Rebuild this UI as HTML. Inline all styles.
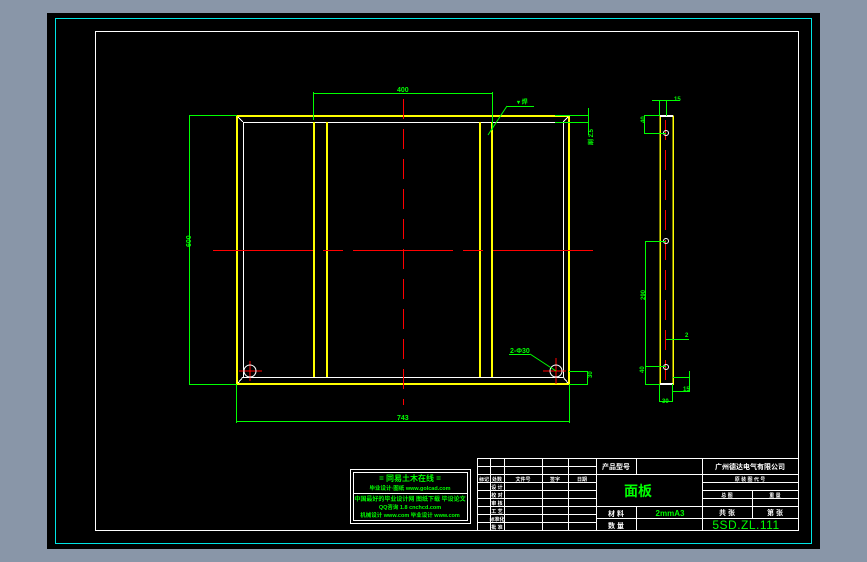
<!DOCTYPE html>
<html><head><meta charset="utf-8"><style>
html,body{margin:0;padding:0;background:#8996a8;width:867px;height:562px;overflow:hidden}
svg{display:block}
text{font-family:"Liberation Sans","Noto Sans CJK SC",sans-serif}
</style></head><body>
<svg width="867" height="562" viewBox="0 0 867 562" xmlns="http://www.w3.org/2000/svg" shape-rendering="crispEdges">
<rect x="47" y="13" width="773" height="536" fill="#000"/>
<rect x="55.5" y="18.5" width="756" height="525" fill="none" stroke="#00e5e5" stroke-width="1"/>
<rect x="95.5" y="31.5" width="703" height="499" fill="none" stroke="#fff" stroke-width="1"/>

<!-- front view -->
<g fill="none">
<rect x="237" y="116" width="332" height="268" stroke="#ffff00" stroke-width="2"/>
<rect x="243.5" y="122.5" width="320" height="255" stroke="#fff" stroke-width="1"/>
<line x1="238" y1="117" x2="243" y2="122" stroke="#fff"/>
<line x1="568" y1="117" x2="563" y2="122" stroke="#fff"/>
<line x1="238" y1="383" x2="243" y2="377" stroke="#fff"/>
<line x1="568" y1="383" x2="563" y2="377" stroke="#fff"/>
<g stroke="#ffff00" stroke-width="2">
<line x1="314" y1="122" x2="314" y2="377"/><line x1="327" y1="122" x2="327" y2="377"/>
<line x1="480" y1="122" x2="480" y2="377"/><line x1="492" y1="122" x2="492" y2="377"/>
</g>
<g stroke="#ff0000" stroke-width="1">
<line x1="213" y1="250.5" x2="313" y2="250.5"/><line x1="323" y1="250.5" x2="343" y2="250.5"/>
<line x1="353" y1="250.5" x2="453" y2="250.5"/><line x1="463" y1="250.5" x2="483" y2="250.5"/>
<line x1="493" y1="250.5" x2="593" y2="250.5"/>
<line x1="403.5" y1="99" x2="403.5" y2="405" stroke-dasharray="20,10"/>
<line x1="239" y1="371" x2="262" y2="371"/><line x1="250" y1="361" x2="250" y2="381"/>
<line x1="543" y1="371" x2="566" y2="371"/><line x1="556" y1="358" x2="556" y2="384"/>
</g>
<circle cx="250" cy="371" r="6" stroke="#fff" shape-rendering="auto"/>
<circle cx="556" cy="371" r="6" stroke="#fff" shape-rendering="auto"/>
<g stroke="#00ff00" stroke-width="1">
<line x1="314" y1="93.5" x2="492" y2="93.5"/><line x1="313.5" y1="92" x2="313.5" y2="120"/><line x1="492.5" y1="92" x2="492.5" y2="130"/>
<line x1="189.5" y1="115" x2="189.5" y2="384"/><line x1="189" y1="115.5" x2="237" y2="115.5"/><line x1="189" y1="384.5" x2="237" y2="384.5"/>
<line x1="237" y1="421.5" x2="569" y2="421.5"/><line x1="236.5" y1="384" x2="236.5" y2="423"/><line x1="569.5" y1="384" x2="569.5" y2="423"/>
<line x1="488" y1="135" x2="507" y2="106" shape-rendering="auto"/><line x1="507" y1="106.5" x2="534" y2="106.5"/>
<line x1="555" y1="115.5" x2="589" y2="115.5"/><line x1="555" y1="122.5" x2="589" y2="122.5"/><line x1="588.5" y1="108" x2="588.5" y2="135"/>
<line x1="509" y1="354.5" x2="530" y2="354.5"/><line x1="530" y1="354" x2="556" y2="371" shape-rendering="auto"/>
<line x1="569" y1="371.5" x2="588" y2="371.5"/><line x1="569" y1="384.5" x2="588" y2="384.5"/><line x1="587.5" y1="371" x2="587.5" y2="384"/>
</g>
</g>
<g fill="#00ff00" font-size="7" font-weight="bold">
<text x="397" y="92">400</text>
<text x="517" y="104" font-size="6">▾ 焊</text>
<text x="510" y="353" font-size="7">2-Φ30</text>
<text x="190" y="254" transform="rotate(-90 187 250)" font-size="7">600</text>
<text x="397" y="420">743</text>
<text x="588" y="382" font-size="6" transform="rotate(-90 588 378)">30</text>
<text x="588" y="150" font-size="6" transform="rotate(-90 588 145)">刷 2.5</text>
</g>

<!-- side view -->
<g fill="none">
<rect x="660" y="116" width="13" height="268" stroke="#ffff00" stroke-width="1.5"/>
<line x1="660" y1="116" x2="673" y2="116" stroke="#fff" stroke-width="2"/>
<line x1="660" y1="384" x2="673" y2="384" stroke="#fff" stroke-width="2"/>
<line x1="665.5" y1="120" x2="665.5" y2="390" stroke="#ff0000" stroke-dasharray="20,10"/>
<circle cx="666" cy="133" r="2.5" stroke="#fff" shape-rendering="auto"/><circle cx="666" cy="241" r="2.5" stroke="#fff" shape-rendering="auto"/><circle cx="666" cy="367" r="2.5" stroke="#fff" shape-rendering="auto"/>
<g stroke="#00ff00">
<line x1="659.5" y1="100" x2="659.5" y2="116"/><line x1="666.5" y1="100" x2="666.5" y2="116"/><line x1="652" y1="100.5" x2="680" y2="100.5"/>
<line x1="644.5" y1="115" x2="644.5" y2="133"/><line x1="644" y1="115.5" x2="660" y2="115.5"/><line x1="644" y1="133.5" x2="666" y2="133.5"/>
<line x1="645.5" y1="241" x2="645.5" y2="384"/><line x1="645" y1="241.5" x2="666" y2="241.5"/><line x1="645" y1="366.5" x2="666" y2="366.5"/><line x1="645" y1="384.5" x2="660" y2="384.5"/>
<line x1="666" y1="339.5" x2="689" y2="339.5"/>
<line x1="673" y1="377.5" x2="690" y2="377.5"/><line x1="689.5" y1="371" x2="689.5" y2="392"/><line x1="673" y1="391.5" x2="690" y2="391.5"/>
<line x1="659.5" y1="384" x2="659.5" y2="402"/><line x1="672.5" y1="384" x2="672.5" y2="402"/><line x1="659" y1="401.5" x2="673" y2="401.5"/>
</g>
</g>
<g fill="#00ff00" font-size="6" font-weight="bold">
<text x="674" y="101">15</text>
<text x="643" y="129" transform="rotate(-90 641 125)">40</text>
<text x="643" y="306" transform="rotate(-90 641 302)">290</text>
<text x="643" y="378" transform="rotate(-90 641 375)">40</text>
<text x="685" y="337">2</text>
<text x="683" y="391">15</text>
<text x="662" y="403">30</text>
</g>

<!-- logo box -->
<rect x="350.5" y="469.5" width="120" height="54" fill="none" stroke="#fff"/>
<rect x="353.5" y="472.5" width="114" height="48" fill="none" stroke="#fff"/>
<line x1="353" y1="493.5" x2="467" y2="493.5" stroke="#fff"/>
<g fill="#00ff00" font-size="7" text-anchor="middle" font-weight="bold">
<text x="410" y="481" font-size="8">=  同易土木在线  =</text>
<text x="410" y="490" font-size="5.5">毕业设计·图纸     www.golcad.com</text>
<text x="410" y="501" font-size="6">中国最好的毕业设计网 图纸下载 毕设论文</text>
<text x="410" y="509" font-size="5.5">QQ咨询 1.8 cnchcd.com</text>
<text x="410" y="517" font-size="5.5">机械设计 www.com  毕业设计 www.com</text>
</g>

<!-- title block -->
<g stroke="#fff" stroke-width="1" fill="none">
<rect x="477.5" y="458.5" width="321" height="72"/>
<line x1="477" y1="466.5" x2="596" y2="466.5"/>
<line x1="477" y1="474.5" x2="798" y2="474.5"/>
<line x1="477" y1="482.5" x2="596" y2="482.5"/><line x1="702" y1="482.5" x2="798" y2="482.5"/>
<line x1="477" y1="490.5" x2="596" y2="490.5"/><line x1="702" y1="490.5" x2="798" y2="490.5"/>
<line x1="477" y1="498.5" x2="596" y2="498.5"/><line x1="702" y1="498.5" x2="798" y2="498.5"/>
<line x1="477" y1="506.5" x2="798" y2="506.5"/>
<line x1="477" y1="514.5" x2="596" y2="514.5"/>
<line x1="596" y1="518.5" x2="798" y2="518.5"/>
<line x1="477" y1="522.5" x2="596" y2="522.5"/>
<line x1="490.5" y1="458" x2="490.5" y2="530"/><line x1="504.5" y1="458" x2="504.5" y2="530"/>
<line x1="542.5" y1="458" x2="542.5" y2="530"/><line x1="568.5" y1="458" x2="568.5" y2="530"/>
<line x1="596.5" y1="458" x2="596.5" y2="530"/>
<line x1="636.5" y1="458" x2="636.5" y2="474"/><line x1="636.5" y1="506" x2="636.5" y2="530"/>
<line x1="702.5" y1="458" x2="702.5" y2="530"/>
<line x1="752.5" y1="490" x2="752.5" y2="518"/>
</g>
<g fill="#fff" font-size="6" font-weight="bold" text-anchor="middle">
<text x="616" y="469" font-size="7">产品型号</text>
<text x="750" y="469" font-size="7">广州德达电气有限公司</text>
<text x="484" y="481" font-size="5">标记</text><text x="497" y="481" font-size="5">处数</text>
<text x="523" y="481" font-size="5">文件号</text><text x="555" y="481" font-size="5">签字</text><text x="582" y="481" font-size="5">日期</text>
<text x="497" y="489" font-size="5">设 计</text>
<text x="497" y="497" font-size="5">校 对</text>
<text x="497" y="505" font-size="5">审 核</text>
<text x="497" y="513" font-size="5">工 艺</text>
<text x="497" y="521" font-size="5">标准化</text>
<text x="497" y="529" font-size="5">批 准</text>
<text x="750" y="481" font-size="5">原 装 图 代 号</text>
<text x="727" y="497" font-size="5">总 图</text><text x="775" y="497" font-size="5">重 量</text>
<text x="727" y="515" font-size="7">共  张</text><text x="775" y="515" font-size="7">第  张</text>
<text x="616" y="516" font-size="7">材  料</text>
<text x="616" y="528" font-size="7">数  量</text>
</g>
<g fill="#00ff00" text-anchor="middle">
<text x="638" y="496" font-size="14" font-weight="bold">面板</text>
<text x="670" y="516" font-size="8" font-weight="bold">2mmA3</text>
<text x="746" y="529" font-size="12" letter-spacing="0.5">5SD.ZL.111</text>
</g>
</svg>
</body></html>
